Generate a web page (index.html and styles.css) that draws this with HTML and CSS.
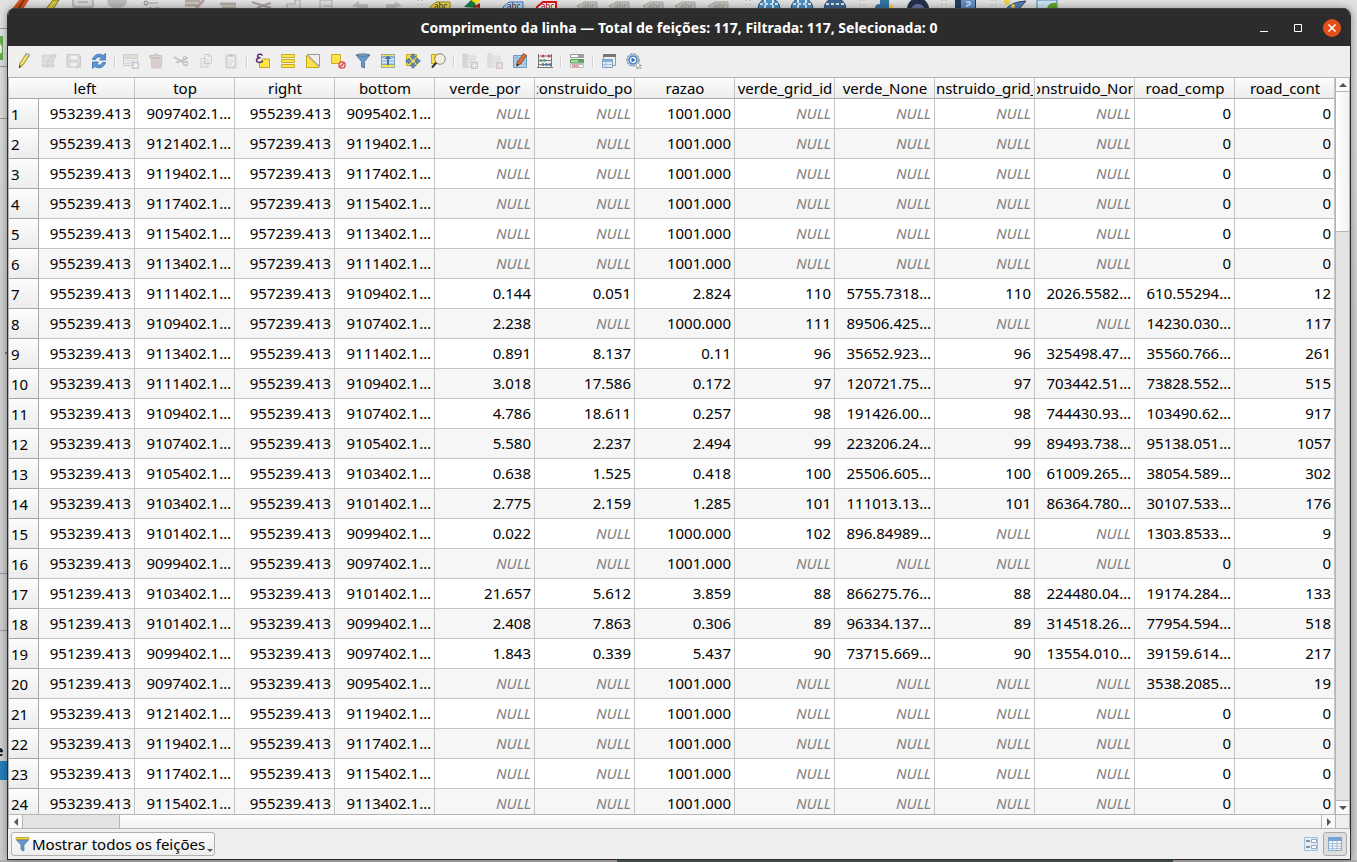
FILE: index.html
```html
<!DOCTYPE html>
<html lang="pt">
<head>
<meta charset="utf-8">
<title>Comprimento da linha</title>
<link rel="stylesheet" href="styles.css">
</head>
<body>
<div class="backdrop" aria-hidden="true">
<svg class="back-top" width="1357" height="9">
<path d="M12 9 19 0h10l-6 9z" fill="#d0561f"/><path d="M18 9l6-9" stroke="#8d3412" stroke-width="2"/>
<path d="M46 9 53 0h6l-6 9z" fill="#d8c837" stroke="#77702c"/>
<path d="M73 0v5q0 2 2 2h16q2 0 2-2V0M78 2h10" fill="#d8d6d6" stroke="#b9b6b6" stroke-width="2"/>
<path d="M107 0q0 8 10 8t10-8z" fill="#bcbcbc"/>
<path d="M149 3h9M149 8h3M155 8h5" stroke="#a0a0a0"/><circle cx="146" cy="3" r="2" fill="#ddd" stroke="#888"/>
<path d="M185 1h15M185 5h12M220 4h16M222 8h14" stroke="#b5ada0" stroke-width="3"/><path d="M196 8l8-8" stroke="#b5a09c" stroke-width="3"/>
<path d="M252 2l12 4 7 2M271 3l-9 3-5 2" fill="none" stroke="#aaa1a1" stroke-width="2"/>
<path d="M287 9V4h8V0h5v9M320 9V0h12v9M323 6h8" fill="#ddd" stroke="#aaa"/>
<path d="M352 6l7-5v3h9v4h-9zM402 6l-7-5v3h-9v4h9z" fill="#bdbdbd"/>
<path d="M418 0v9M422 0v9M746 0v9M750 0v9M860 0v9M864 0v9M942 0v9M946 0v9M992 0v9M996 0v9" stroke="#aaa" stroke-dasharray="1 3"/>
<path d="M430 7l6-5h14v8h-18z" fill="#edd346" stroke="#958324"/><path d="M503 7l6-5h14v8h-18z" fill="#b9d6f3" stroke="#3479c6"/><path d="M537 7l6-5h13v8h-18z" fill="#fff" stroke="#e91313" stroke-width="2"/>
<path d="M464 7l7-7h4l1 8z" fill="#187b48"/><path d="M471 0h9l-4 4z" fill="#ffe000"/><path d="M473 7l7-4v5z" fill="#b91a16"/>
<g fill="#c9c9bf" stroke="#aaa"><path d="M577 6l7-4h13v7h-17zM609 6l7-4h13v7h-17zM643 6l7-4h13v7h-17zM675 6l7-4h13v7h-17zM708 6l7-4h13v7h-17z"/></g>
<g font-family="Noto Sans" font-size="8" fill="#333"><text x="434" y="9">abc</text><text x="507" y="9">abc</text><text x="541" y="9" fill="#c20000">abc</text></g>
<g font-family="Noto Sans" font-size="8" fill="#999"><text x="582" y="9">abc</text><text x="614" y="9">abc</text><text x="648" y="9">abc</text><text x="680" y="9">abc</text><text x="713" y="9">abc</text></g>
<g fill="#4d93c9" stroke="#28527c"><circle cx="769" cy="9" r="11"/><circle cx="802" cy="9" r="11"/><circle cx="835" cy="9" r="11" fill="#41678d"/></g><path d="M760 4h18M793 4h18M826 4h18M765 0v9M773 0v9M798 0v9M806 0v9" stroke="#d7ebf6" stroke-width="2" stroke-dasharray="3 2"/>
<path d="M875 8q0-4 5-4V0h9v8z" fill="#3773a4"/><path d="M889 9V4q4 0 5 4z" fill="#f8d548"/>
<circle cx="918" cy="9" r="11" fill="#26304b"/><circle cx="918" cy="11" r="7" fill="#6c75ad"/>
<path d="M955 0h21v9h-21z" fill="#223c5d"/><path d="M961 0h14v9h-14z" fill="#6491c3"/><path d="M966 2h4v3h-3v2" fill="none" stroke="white"/>
<path d="M1006 9q5-7 20-8l-7 8z" fill="#5581b5" stroke="#28436a"/><circle cx="1007" cy="2" r="3" fill="#edd34a"/><circle cx="1013" cy="6" r="2" fill="#edd34a"/>
<path d="M1037 0h20v9h-20z" fill="#cce5f5" stroke="#4b86b4"/><path d="M1047 8q2-6 10-5v6z" fill="#64a728"/>
</svg>
<svg class="back-left" width="8" height="862"><path d="M0 28.500h8M0 66.500h8M0 118.500h8M0 573.500h8M0 630.500h8" stroke="#999"/><path d="M0 36h3v24H0z" fill="#63ad49"/><path d="M0 43l2 4v5l-2 2z" fill="#e6f1e2"/><path d="M5 353h2" stroke="#333"/><path d="M0 761h8v19H0z" fill="#2580bd"/><text x="-5" y="756" font-family="Noto Sans" font-size="14" font-weight="bold">e</text></svg>
<div class="back-bottom"></div>
</div>

<main class="window">
<header class="titlebar">
<h1>Comprimento da linha — Total de feições: 117, Filtrada: 117, Selecionada: 0</h1>
<div class="winbuttons">
<button aria-label="Minimizar"><svg width="8" height="14"><path d="M0 10.500h8" stroke="#fff"/></svg></button>
<button aria-label="Maximizar"><svg width="8" height="14"><path d="M.5 3.500h7v7h-7z" fill="none" stroke="#fff"/></svg></button>
<button class="close" aria-label="Fechar"><svg width="18" height="18"><path d="M5.500 5.500l7 7M12.500 5.500l-7 7" stroke="#fff" stroke-width="1.500"/></svg></button>
</div>
</header>

<nav class="toolbar" aria-label="Ferramentas">
<button aria-label="Editar"><svg viewBox="0 0 16 16"><path d="M3 15l1-5 6-9 3 2-6 9z" fill="#e8d53e" stroke="#8f8336" stroke-width=".8"/><path d="M9.500 1.500l1-1.500 3.500 2-1 1.500z" fill="#ccc" stroke="#777" stroke-width=".5"/><path d="M5.500 11l6-9" stroke="#fff49a"/><path d="M3 15l.6-2.800L5.400 13.400z" fill="#333"/></svg></button>
<button class="off" disabled aria-label="Edição múltipla"><svg viewBox="0 0 16 16"><path d="M1 2h12v3H1zM1 6.500h12v3H1zM1 11h12v3H1z" fill="#bdbba9" stroke="#999" stroke-width=".6"/><path d="M5 14l1-3.500L13 1l2.500 1.500-7 10z" fill="#c9b9b5" stroke="#777" stroke-width=".7"/></svg></button>
<button class="off" disabled aria-label="Salvar"><svg viewBox="0 0 16 16"><path d="M1 1.500h12l1.500 1.500v11H1z" fill="#bbb" stroke="#888"/><path d="M4 2h8v5H4zM4 9.500h8V14H4z" fill="#f5f5f5" stroke="#999" stroke-width=".7"/><path d="M10 15l5-5" stroke="#aaa" stroke-width="2.500"/></svg></button>
<button aria-label="Recarregar"><svg viewBox="0 0 16 16"><path d="M1.500 6.500C2.500 2 8-.5 12 2.500L14.500.500V7H8.500l2-2C8 3 5.500 4 4.500 6.500zM14.500 9.500C13.500 14 8 16.500 4 13.500L1.500 15.500V9h6l-2 2C8 13 10.500 12 11.500 9.500z" fill="#5b97d5" stroke="#3a70ad" stroke-width=".8"/></svg></button>
<span class="sep"></span>
<button class="off" disabled aria-label="Adicionar feição"><svg viewBox="0 0 16 16"><path d="M.5 4h14v8.500H.5z" fill="#eee" stroke="#999"/><path d="M.5 1.500h14v4H.5z" fill="#c3c3a4" stroke="#999"/><path d="M1 8h12M1 10.500h12M5 6v6M9 6v6" stroke="#aaa" stroke-width=".8"/><path d="M9.500 9.500h6v6h-6z" fill="#bbb" stroke="#888"/><path d="M12.500 10v5M10 12.500h5M10.800 10.800l3.400 3.400M14.200 10.800l-3.400 3.400" stroke="#fff" stroke-width=".8"/></svg></button>
<button class="off" disabled aria-label="Excluir"><svg viewBox="0 0 16 16"><path d="M3 5.500h11l-1 9.500H4zM1.500 2.500h12v2h-12zM5.500 1h4v1.500" fill="#c9aaa8" stroke="#9d7d7b"/><path d="M6 6.500V14M8.500 6.500V14M11 6.500V14" stroke="#9d7d7b"/></svg></button>
<button class="off" disabled aria-label="Recortar"><svg viewBox="0 0 16 16"><path d="M1 4l10 6M15 4.500L8 8l-5 1.500" fill="none" stroke="#777" stroke-width="1.500"/><circle cx="12.500" cy="10.500" r="2" fill="none" stroke="#8d6967" stroke-width="1.300"/><circle cx="12" cy="5" r="1.600" fill="none" stroke="#8d6967"/></svg></button>
<button class="off" disabled aria-label="Copiar"><svg viewBox="0 0 16 16"><path d="M6.500 1.500h5l2 2v7h-7zM3 5.500h5l2 2V14H3z" fill="#eee" stroke="#999"/><path d="M5 9h3M5 11h3M11 2v2h2" fill="none" stroke="#999"/></svg></button>
<button class="off" disabled aria-label="Colar"><svg viewBox="0 0 16 16"><path d="M3 2h10v13H3z" fill="#bbb" stroke="#999"/><path d="M5 4h6v9H5z" fill="#f4f4f4"/><path d="M6 1h4v2.500H6z" fill="#888"/><path d="M6 7h4M6 9h4M6 11h3" stroke="#aaa"/></svg></button>
<span class="sep"></span>
<button aria-label="Selecionar por expressão"><svg viewBox="0 0 16 16"><path d="M7.500 6h7v8.500H4.500V11z" fill="#fbe348" stroke="#c3a51d"/><path d="M7.500 2.500C6 .8 2.500 1 2.500 3c0 1.500 2 1.700 3 1.700C3 4.800 1.500 5.700 1.500 7.300c0 2.700 4.500 2.700 6.500.7" fill="none" stroke="#5b2c68" stroke-width="1.500"/></svg></button>
<button aria-label="Selecionar tudo"><svg viewBox="0 0 16 16"><path d="M1.500 1.500h13v3h-13zM1.500 6.500h13v3h-13zM1.500 11.500h13v3h-13z" fill="#fbe348" stroke="#c9ac2a"/></svg></button>
<button aria-label="Inverter seleção"><svg viewBox="0 0 16 16"><path d="M2.500 1.500h12v12z" fill="#eee" stroke="#999"/><path d="M1.500 2v12.500H14z" fill="#fbe348" stroke="#c3a51d"/></svg></button>
<button aria-label="Limpar seleção"><svg viewBox="0 0 16 16"><path d="M1.500 1.500h9v9h-9z" fill="#fbe348" stroke="#c9ac2a"/><circle cx="12" cy="12" r="3.200" fill="#f7cfcf" stroke="#d84c4c" stroke-width="1.300"/><path d="M9.500 14.500l5-5" stroke="#d84c4c" stroke-width="1.300"/></svg></button>
<button aria-label="Filtrar"><svg viewBox="0 0 16 16"><path d="M1 2h14L9.500 8.500V15l-3-1V8.500z" fill="#6a97c6" stroke="#48719b" stroke-width=".8"/><ellipse cx="8" cy="2" rx="6.500" ry="1.200" fill="#8d9fb0" stroke="#416c96" stroke-width=".7"/></svg></button>
<button aria-label="Mover seleção ao topo"><svg viewBox="0 0 16 16"><path d="M1.500 3h13v9h-13z" fill="#a9c7e3" stroke="#7ba0c5"/><path d="M2 6.500h12M2 9.500h12" stroke="#e1edf7"/><path d="M1.500 1.500h13v2h-13zM1.500 11.500h13v3h-13z" fill="#fbe348" stroke="#7d9cae" stroke-width=".8"/><path d="M8 2.500l3.500 3.500H9v6H7V6H4.500z" fill="#4377aa"/></svg></button>
<button aria-label="Mover mapa"><svg viewBox="0 0 16 16"><path d="M1.500 1.500h10v11h-10z" fill="#fbe348" stroke="#c3a51d"/><path d="M8 .5l3 3.500H9.300v2.700H12V5l3.500 3-3.500 3V9.300H9.300V12H11l-3 3.500L5 12h1.700V9.300H4V11L.5 8 4 5v1.700h2.700V4H5z" fill="#6088b5" stroke="#42678f" stroke-width=".6"/><path d="M6.200 6.200h3.600v3.600H6.200z" fill="#f0dd65"/></svg></button>
<button aria-label="Aproximar"><svg viewBox="0 0 16 16"><path d="M1.500 1.500h9v9h-9z" fill="#fbe348" stroke="#c3a51d"/><circle cx="10" cy="6" r="5.300" fill="#f1f1e2" fill-opacity=".94" stroke="#888"/><path d="M6.300 9.700L2 14.500" stroke="#37301c" stroke-width="2"/></svg></button>
<span class="sep"></span>
<button class="off" disabled aria-label="Novo campo"><svg viewBox="0 0 16 16"><path d="M1 1h4v13H1z" fill="#bbb599" stroke="#999"/><path d="M5 3h8v11H5z" fill="#ddd" stroke="#aaa"/><path d="M6 6h7M6 9h7M1 5h4M1 9h4" stroke="#aaa"/><path d="M9.500 9.500h6v6h-6z" fill="#b5b5a5" stroke="#888"/><path d="M12.500 10v5M10 12.500h5" stroke="#fff"/></svg></button>
<button class="off" disabled aria-label="Excluir campo"><svg viewBox="0 0 16 16"><path d="M1 1h4v13H1z" fill="#ccc" stroke="#aaa"/><path d="M5 3h8v11H5z" fill="#ddd" stroke="#bbb"/><path d="M6 6h7M6 9h7M1 5h4M1 9h4" stroke="#bbb"/><path d="M9.500 9.500h6v6h-6z" fill="#c8aaa8" stroke="#a88"/><path d="M11 11l3 3M14 11l-3 3" stroke="#fff"/></svg></button>
<button aria-label="Organizar colunas"><svg viewBox="0 0 16 16"><path d="M1.500 2.500h13v12h-13z" fill="#b5d2ec" stroke="#6c98c4"/><path d="M2 5h12M2 8h12M2 11h12M5 3v11" stroke="#7fa7ce" stroke-width=".8"/><path d="M4.500 13l1-4L11.500.500l3 2L8.500 11z" fill="#dd7135" stroke="#753b1d" stroke-width=".8"/><path d="M4.500 13l.7-2.300L7 12z" fill="#222"/></svg></button>
<button aria-label="Calculadora de campo"><svg viewBox="0 0 16 16"><path d="M1.500 1v14M14.500 1v14M1 3h14M1 7.500h14M1 11.500h14M0 14.500h16" stroke="#777"/><g fill="#ca4548"><circle cx="6" cy="3" r="1.500"/><circle cx="12" cy="3" r="1.500"/></g><g fill="#59a56a"><circle cx="4" cy="7.500" r="1.500"/><circle cx="7.500" cy="7.500" r="1.500"/></g><g fill="#527c9f"><circle cx="6" cy="11.500" r="1.500"/><circle cx="9.500" cy="11.500" r="1.500"/><circle cx="13" cy="11.500" r="1.500"/></g></svg></button>
<span class="sep"></span>
<button aria-label="Formatação condicional"><svg viewBox="0 0 16 16"><path d="M1.500 1.500h13v3h-13z" fill="#fafafa" stroke="#999"/><path d="M1.500 6.500h13v3.500h-13z" fill="#9bdc9f" stroke="#5c9c63"/><path d="M1.500 11.500h13v3h-13z" fill="#fff" stroke="#bbb"/><path d="M9 3h5" stroke="#444"/><path d="M9 8h5" stroke="#215b29"/><path d="M3 13h7" stroke="#ed3434"/></svg></button>
<span class="sep"></span>
<button aria-label="Acoplar tabela"><svg viewBox="0 0 16 16"><path d="M2.500 1.500h12v11h-12z" fill="#eee" stroke="#999"/><path d="M2 1h13v3H2z" fill="#777"/><path d="M1.500 6.500h10v8h-10z" fill="#dfebf6" stroke="#7ba0c5"/><path d="M2 7h9v2H2z" fill="#8fb4da"/><path d="M5 9v5M2 11.500h9" stroke="#a7c2dc"/></svg></button>
<button aria-label="Ações"><svg viewBox="0 0 16 16"><circle cx="7" cy="7" r="6" fill="#e9f2fb" stroke="#8b9bad" stroke-width="1.500" stroke-dasharray="2.700 .8"/><circle cx="7" cy="7" r="4" fill="none" stroke="#4586c7" stroke-width="1.600"/><path d="M5.500 4.500L9.500 7l-4 2.500z" fill="#2e6ba8"/><path d="M9.500 9l6 3.500-2.500.700 2 2-1 1-2-2-.7 2z" fill="#fff" stroke="#777" stroke-width=".7"/></svg></button>
</nav>

<section class="grid">
<div class="viewport">
<table>
<colgroup><col class="c-num"><col class="c-left"><col span="12"></colgroup>
<thead><tr><td></td><th><span>left</span><th><span>top</span><th><span>right</span><th><span>bottom</span><th><span>verde_por</span><th><span>construido_por</span><th><span>razao</span><th><span>verde_grid_id</span><th><span>verde_None</span><th><span>construido_grid_id</span><th><span>construido_None</span><th><span>road_comp</span><th><span>road_cont</span></tr></thead>
<tbody>
<tr><th>1<td>953239.413<td>9097402.1…<td>955239.413<td>9095402.1…<td><i>NULL</i><td><i>NULL</i><td>1001.000<td><i>NULL</i><td><i>NULL</i><td><i>NULL</i><td><i>NULL</i><td>0<td>0
<tr><th>2<td>955239.413<td>9121402.1…<td>957239.413<td>9119402.1…<td><i>NULL</i><td><i>NULL</i><td>1001.000<td><i>NULL</i><td><i>NULL</i><td><i>NULL</i><td><i>NULL</i><td>0<td>0
<tr><th>3<td>955239.413<td>9119402.1…<td>957239.413<td>9117402.1…<td><i>NULL</i><td><i>NULL</i><td>1001.000<td><i>NULL</i><td><i>NULL</i><td><i>NULL</i><td><i>NULL</i><td>0<td>0
<tr><th>4<td>955239.413<td>9117402.1…<td>957239.413<td>9115402.1…<td><i>NULL</i><td><i>NULL</i><td>1001.000<td><i>NULL</i><td><i>NULL</i><td><i>NULL</i><td><i>NULL</i><td>0<td>0
<tr><th>5<td>955239.413<td>9115402.1…<td>957239.413<td>9113402.1…<td><i>NULL</i><td><i>NULL</i><td>1001.000<td><i>NULL</i><td><i>NULL</i><td><i>NULL</i><td><i>NULL</i><td>0<td>0
<tr><th>6<td>955239.413<td>9113402.1…<td>957239.413<td>9111402.1…<td><i>NULL</i><td><i>NULL</i><td>1001.000<td><i>NULL</i><td><i>NULL</i><td><i>NULL</i><td><i>NULL</i><td>0<td>0
<tr><th>7<td>955239.413<td>9111402.1…<td>957239.413<td>9109402.1…<td>0.144<td>0.051<td>2.824<td>110<td>5755.7318…<td>110<td>2026.5582…<td>610.55294…<td>12
<tr><th>8<td>955239.413<td>9109402.1…<td>957239.413<td>9107402.1…<td>2.238<td><i>NULL</i><td>1000.000<td>111<td>89506.425…<td><i>NULL</i><td><i>NULL</i><td>14230.030…<td>117
<tr><th>9<td>953239.413<td>9113402.1…<td>955239.413<td>9111402.1…<td>0.891<td>8.137<td>0.11<td>96<td>35652.923…<td>96<td>325498.47…<td>35560.766…<td>261
<tr><th>10<td>953239.413<td>9111402.1…<td>955239.413<td>9109402.1…<td>3.018<td>17.586<td>0.172<td>97<td>120721.75…<td>97<td>703442.51…<td>73828.552…<td>515
<tr><th>11<td>953239.413<td>9109402.1…<td>955239.413<td>9107402.1…<td>4.786<td>18.611<td>0.257<td>98<td>191426.00…<td>98<td>744430.93…<td>103490.62…<td>917
<tr><th>12<td>953239.413<td>9107402.1…<td>955239.413<td>9105402.1…<td>5.580<td>2.237<td>2.494<td>99<td>223206.24…<td>99<td>89493.738…<td>95138.051…<td>1057
<tr><th>13<td>953239.413<td>9105402.1…<td>955239.413<td>9103402.1…<td>0.638<td>1.525<td>0.418<td>100<td>25506.605…<td>100<td>61009.265…<td>38054.589…<td>302
<tr><th>14<td>953239.413<td>9103402.1…<td>955239.413<td>9101402.1…<td>2.775<td>2.159<td>1.285<td>101<td>111013.13…<td>101<td>86364.780…<td>30107.533…<td>176
<tr><th>15<td>953239.413<td>9101402.1…<td>955239.413<td>9099402.1…<td>0.022<td><i>NULL</i><td>1000.000<td>102<td>896.84989…<td><i>NULL</i><td><i>NULL</i><td>1303.8533…<td>9
<tr><th>16<td>953239.413<td>9099402.1…<td>955239.413<td>9097402.1…<td><i>NULL</i><td><i>NULL</i><td>1001.000<td><i>NULL</i><td><i>NULL</i><td><i>NULL</i><td><i>NULL</i><td>0<td>0
<tr><th>17<td>951239.413<td>9103402.1…<td>953239.413<td>9101402.1…<td>21.657<td>5.612<td>3.859<td>88<td>866275.76…<td>88<td>224480.04…<td>19174.284…<td>133
<tr><th>18<td>951239.413<td>9101402.1…<td>953239.413<td>9099402.1…<td>2.408<td>7.863<td>0.306<td>89<td>96334.137…<td>89<td>314518.26…<td>77954.594…<td>518
<tr><th>19<td>951239.413<td>9099402.1…<td>953239.413<td>9097402.1…<td>1.843<td>0.339<td>5.437<td>90<td>73715.669…<td>90<td>13554.010…<td>39159.614…<td>217
<tr><th>20<td>951239.413<td>9097402.1…<td>953239.413<td>9095402.1…<td><i>NULL</i><td><i>NULL</i><td>1001.000<td><i>NULL</i><td><i>NULL</i><td><i>NULL</i><td><i>NULL</i><td>3538.2085…<td>19
<tr><th>21<td>953239.413<td>9121402.1…<td>955239.413<td>9119402.1…<td><i>NULL</i><td><i>NULL</i><td>1001.000<td><i>NULL</i><td><i>NULL</i><td><i>NULL</i><td><i>NULL</i><td>0<td>0
<tr><th>22<td>953239.413<td>9119402.1…<td>955239.413<td>9117402.1…<td><i>NULL</i><td><i>NULL</i><td>1001.000<td><i>NULL</i><td><i>NULL</i><td><i>NULL</i><td><i>NULL</i><td>0<td>0
<tr><th>23<td>953239.413<td>9117402.1…<td>955239.413<td>9115402.1…<td><i>NULL</i><td><i>NULL</i><td>1001.000<td><i>NULL</i><td><i>NULL</i><td><i>NULL</i><td><i>NULL</i><td>0<td>0
<tr><th>24<td>953239.413<td>9115402.1…<td>955239.413<td>9113402.1…<td><i>NULL</i><td><i>NULL</i><td>1001.000<td><i>NULL</i><td><i>NULL</i><td><i>NULL</i><td><i>NULL</i><td>0<td>0
</tbody>
</table>
</div>
<div class="vscroll">
<button aria-label="Para cima"><svg width="8" height="4"><path d="M0 4l4-4 4 4z"/></svg></button>
<div class="thumb"></div><div class="track"></div>
<button class="end" aria-label="Para baixo"><svg width="8" height="4"><path d="M0 0l4 4 4-4z"/></svg></button>
</div>
<div class="hscroll">
<button aria-label="Para a esquerda"><svg width="4" height="8"><path d="M4 0L0 4l4 4z"/></svg></button>
<div class="track"></div><div class="thumb"></div>
<button class="end" aria-label="Para a direita"><svg width="4" height="8"><path d="M0 0l4 4-4 4z"/></svg></button>
</div>
<div class="corner"></div>
</section>

<footer class="footer">
<button class="filter">
<svg class="funnel" viewBox="0 0 16 16"><path d="M1.500 3.500h13L9.500 9v6.500l-3-1.500V9z" fill="#6796c8" stroke="#446f9c" stroke-width=".8"/><path d="M1.200 1h13.600v2H1.200z" fill="#ffe640" stroke="#a98f20" stroke-width=".8"/></svg>
<span>Mostrar todos os feições</span>
<svg class="caret" width="6" height="3"><path d="M0 0h6L3 3z" fill="#555"/></svg>
</button>
<div class="views">
<button aria-label="Formulário"><svg viewBox="0 0 16 16"><path d="M1.500 1.500h13v13h-13z" fill="#e4edf6" stroke="#a4bed9"/><path d="M3 5h4M3 11h4" stroke="#333"/><path d="M8.500 3.500h5v3h-5zM8.500 9.500h5v3h-5z" fill="#fff" stroke="#8babcf"/></svg></button>
<button class="active" aria-label="Tabela"><svg viewBox="0 0 16 16"><path d="M1.500 1.500h13v13h-13z" fill="#f2f6fa" stroke="#8babcf"/><path d="M1 1h14v4H1z" fill="#78a4d3"/><path d="M5.500 5v9.500M10 5v9.500M2 7.500h12M2 10h12M2 12.500h12" stroke="#9ab8d8" stroke-width=".8"/></svg></button>
</div>
</footer>
</main>
</body>
</html>
```
FILE: styles.css
```css
* { box-sizing: border-box; }
body {
  margin: 0;
  height: 100vh;
  padding: 8px 6px 2px 7px;
  position: relative;
  display: flex;
  overflow: hidden;
  background: #d2d2d2;
  color: #000;
  font: 15px/20px "Noto Sans", "Open Sans", sans-serif;
}
button { margin: 0; padding: 0; border: 0; background: none; font: inherit; color: inherit; }
svg { display: block; flex: none; }

.backdrop { position: absolute; inset: 0; background: linear-gradient(#e2e2e2, #d0d0d0 300px); }
.back-top, .back-left { position: absolute; top: 0; left: 0; }
.back-bottom {
  position: absolute; left: 0; right: 0; bottom: 0; height: 2px;
  background: linear-gradient(90deg, #b5b2b1 617px, #4f5a5a 617px 1173px, #b5b2b1 1173px);
}

.window {
  position: relative;
  flex: 1;
  min-width: 0;
  display: flex;
  flex-direction: column;
  border: 1px solid #2c2c2c;
  border-top: 0;
  border-radius: 8px 8px 0 0;
  overflow: hidden;
  background: #efefef;
  box-shadow: 0 0 8px rgba(0, 0, 0, .4);
}
.titlebar {
  flex: none;
  height: 38px;
  display: grid;
  grid-template-columns: 92px 1fr 92px;
  align-items: center;
  background: #2c2c2c;
  border-top: 1px solid #3e3e3e;
}
.titlebar h1 {
  grid-column: 2;
  margin: 0;
  text-align: center;
  white-space: nowrap;
  color: #fff;
  font-size: 14px;
  line-height: 20px;
}
.winbuttons { display: flex; align-items: center; justify-content: flex-end; gap: 26px; padding-right: 9px; }
.winbuttons .close { border-radius: 50%; background: #e4501b; margin-left: -5px; }

.toolbar { flex: none; height: 31px; display: flex; padding-left: 3px; }
.toolbar button { width: 25px; padding: 7px 4px 8px 5px; }
.toolbar svg { width: 16px; height: 16px; }
.toolbar .off { opacity: .38; }
.sep { width: 1px; height: 12px; margin: 9px 3px; background: #cfcfcf; box-shadow: 1px 0 #fff; }

.grid {
  flex: 1;
  min-height: 0;
  display: grid;
  grid-template: minmax(0, 1fr) 14px / minmax(0, 1fr) 14px;
  border: 1px solid #b5b5b5;
}
.viewport { overflow: hidden; background: #fff; }
table { width: 100%; table-layout: fixed; border-collapse: separate; border-spacing: 0; }
.c-num { width: 30px; }
.c-left { width: 96px; }
th, td { padding: 0; font-weight: normal; white-space: nowrap; overflow: hidden; }
thead th, thead td {
  height: 21px;
  border-right: 1px solid #c4c4c4;
  border-bottom: 1px solid #a8a8a8;
  background: linear-gradient(#fdfdfd, #ececec);
}
thead td { border-right: 0; }
thead th { padding: 0 1px 0 2px; }
thead th:nth-child(2) { padding: 0 5px 0 2px; }
thead span { display: flex; justify-content: center; overflow: hidden; line-height: 20px; }
tbody td {
  height: 30px;
  padding: 0 3px 1px 0;
  text-align: right;
  border-right: 1px solid #c4c4c4;
  border-bottom: 1px solid #c4c4c4;
}
tbody tr:nth-child(even) td { background: #f6f6f6; }
tbody th {
  padding: 1px 0 0 2px;
  text-align: left;
  border-right: 1px solid #a8a8a8;
  border-bottom: 1px solid #a8a8a8;
  background: linear-gradient(#fdfdfd, #ececec);
}
td i { color: #808080; }

.vscroll, .hscroll { display: flex; }
.vscroll { flex-direction: column; border-left: 1px solid #b5b5b5; }
.hscroll { border-top: 1px solid #b5b5b5; }
.vscroll button, .hscroll button { display: flex; align-items: center; justify-content: center; flex: none; background: #fafafa; fill: #555; }
.vscroll button { height: 14px; border-bottom: 1px solid #b5b5b5; }
.hscroll button { width: 14px; border-right: 1px solid #b5b5b5; }
.vscroll .end { border-top: 1px solid #b5b5b5; border-bottom: 0; }
.hscroll .end { border-left: 1px solid #b5b5b5; border-right: 0; }
.track { background: #e3e3e3; }
.vscroll .thumb { flex: 139; border-bottom: 1px solid #b5b5b5; background: linear-gradient(90deg, #fff, #f1f1f1); }
.vscroll .track { flex: 569; }
.hscroll .track { flex: 96; }
.hscroll .thumb { flex: 1202; border-left: 1px solid #b5b5b5; background: linear-gradient(#fff, #f1f1f1); }
.corner { border: solid #b5b5b5; border-width: 1px 0 0 1px; background: #efefef; }

.footer { flex: none; height: 30px; display: flex; align-items: center; justify-content: space-between; padding: 0 3px; }
.filter {
  height: 24px;
  display: flex;
  align-items: center;
  gap: 2px;
  padding: 0 1px 0 3px;
  border: 1px solid #b0b0b0;
  border-radius: 3px;
  background: linear-gradient(#fbfbfb, #eee);
}
.funnel { width: 15px; height: 16px; }
.caret { align-self: flex-end; margin-bottom: 3px; }
.views { display: flex; }
.views button { width: 24px; height: 24px; padding: 3px; border: 1px solid transparent; border-radius: 3px; }
.views svg { width: 16px; height: 16px; }
.views .active { border-color: #a9a9a9; background: #dedede; }
```
